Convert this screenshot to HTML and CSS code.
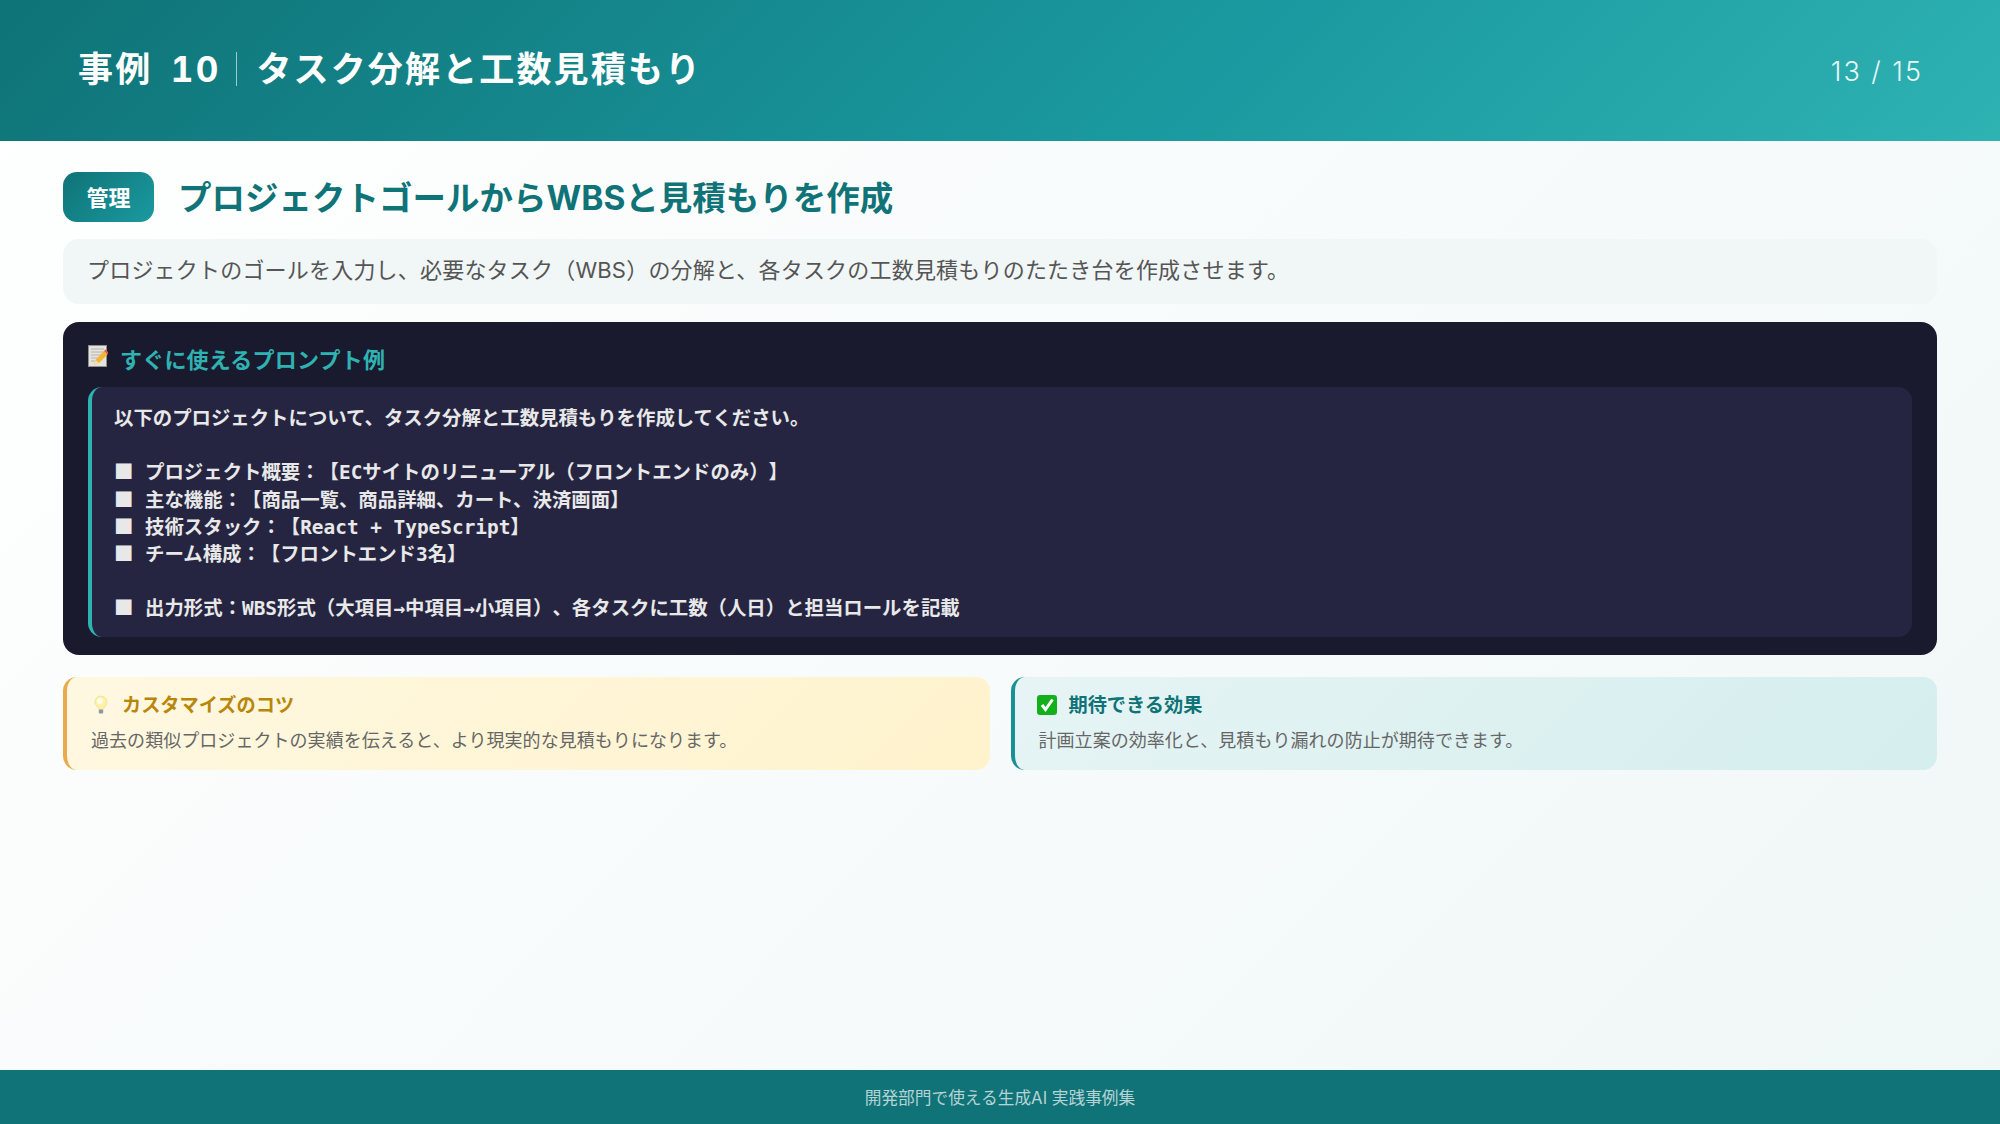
FILE: index.html
```html
<!DOCTYPE html>
<html lang="ja">
<head>
  <meta charset="UTF-8" />
  <title>事例 10 タスク分解と工数見積もり</title>
  <link rel="stylesheet" href="styles.css">
</head>
<body>
  <header class="slide-header">
    <h1>事例 10<span class="divider"></span>タスク分解と工数見積もり</h1>
    <span class="page-no">13 / 15</span>
  </header>

  <main class="content">
    <div class="case-title">
      <span class="badge">管理</span>
      <h2>プロジェクトゴールからWBSと見積もりを作成</h2>
    </div>
    <p class="lead">プロジェクトのゴールを入力し、必要なタスク（WBS）の分解と、各タスクの工数見積もりのたたき台を作成させます。</p>

    <section class="prompt">
      <h3>
        <svg class="icon-memo" viewBox="0 0 20 22" width="20" height="22">
          <rect x=".5" y=".5" width="18" height="21" fill="#e6e3dc" stroke="#8f8f8f"/>
          <path d="M3 4h13M3 7h13M3 10h13M3 13h7M3 16h4" stroke="#b4b4b4"/>
          <path d="M6 20l1.5-5L16 6l3.5 3.5L11 18z" fill="#f2b632"/>
          <path d="M6 20l1.5-5 3.5 3z" fill="#f6dcb0"/>
          <path d="M16 6l1.5-1.5L21 8l-1.5 1.5z" fill="#d9604c"/>
        </svg>
        すぐに使えるプロンプト例
      </h3>
      <pre class="prompt-body">以下のプロジェクトについて、タスク分解と工数見積もりを作成してください。

<span class="mark">■</span> プロジェクト概要：【ECサイトのリニューアル（フロントエンドのみ）】
<span class="mark">■</span> 主な機能：【商品一覧、商品詳細、カート、決済画面】
<span class="mark">■</span> 技術スタック：【React + TypeScript】
<span class="mark">■</span> チーム構成：【フロントエンド3名】

<span class="mark">■</span> 出力形式：WBS形式（大項目→中項目→小項目）、各タスクに工数（人日）と担当ロールを記載</pre>
    </section>

    <div class="cards">
      <section class="card card-tip">
        <h4>
          <svg viewBox="0 0 20 20" width="20" height="20">
            <path d="M10 1a6 6 0 0 0-4 10.5c1 1 1.6 2 1.7 3h4.6c.1-1 .7-2 1.7-3A6 6 0 0 0 10 1z" fill="#fdf0a8" stroke="#e8d98a" stroke-width=".6"/>
            <circle cx="9" cy="6" r="3" fill="#fffde8"/>
            <rect x="7.8" y="14.6" width="4.4" height="3.8" rx="1" fill="#8f95a3"/>
          </svg>
          カスタマイズのコツ
        </h4>
        <p>過去の類似プロジェクトの実績を伝えると、より現実的な見積もりになります。</p>
      </section>
      <section class="card card-effect">
        <h4>
          <svg viewBox="0 0 20 20" width="20" height="20">
            <rect width="20" height="20" rx="3" fill="#14b01c"/>
            <path d="M5 10l3.5 4.5L15.5 4.5" fill="none" stroke="#fff" stroke-width="3"/>
          </svg>
          期待できる効果
        </h4>
        <p>計画立案の効率化と、見積もり漏れの防止が期待できます。</p>
      </section>
    </div>
  </main>

  <footer class="slide-footer">開発部門で使える生成AI 実践事例集</footer>
</body>
</html>
```

FILE: styles.css
```css
/* Base */
* {
  box-sizing: border-box;
  margin: 0;
  padding: 0;
}
html, body {
  height: 100%;
}
body {
  display: flex;
  flex-direction: column;
  font-family: 'Inter', 'Noto Sans CJK JP', sans-serif;
  color: #555;
  background: linear-gradient(135deg, #fff 0%, #f0f7f7 100%);
}

/* Header */
.slide-header {
  height: 141px;
  flex-shrink: 0;
  display: flex;
  align-items: center;
  justify-content: space-between;
  padding: 0 78px;
  color: #fff;
  background: linear-gradient(135deg, #0f7377 0%, #1a9aa0 60%, #2fb2b2 100%);
}
.slide-header h1 {
  display: flex;
  align-items: center;
  font-size: 35px;
  font-weight: 700;
  letter-spacing: 2.15px;
  word-spacing: 7px;
  font-feature-settings: "tnum";
  padding-bottom: 8px;
}
.divider {
  width: 1px;
  height: 34px;
  margin: 5px 19px 0 16px;
  background: rgba(255,255,255,0.6);
}
.page-no {
  font-size: 27px;
  font-weight: 300;
  letter-spacing: 2px;
  margin: 2px -1px 0 0;
  opacity: 0.9;
}

/* Content */
.content {
  flex: 1;
  padding: 31px 63px 0;
}
.case-title {
  height: 50px;
  display: flex;
  align-items: center;
  gap: 24px;
}
.badge {
  width: 91px;
  height: 50px;
  padding-bottom: 3px;
  display: flex;
  align-items: center;
  justify-content: center;
  border-radius: 14px;
  color: #fff;
  font-size: 22px;
  font-weight: 700;
  background: linear-gradient(135deg, #0f7377, #1a9aa0);
}
.case-title h2 {
  padding-bottom: 4px;
  font-size: 33.5px;
  font-weight: 700;
  color: #0f7377;
}
.lead {
  height: 65px;
  margin-top: 17px;
  padding: 0 24px;
  line-height: 62px;
  font-size: 22px;
  letter-spacing: 0.2px;
  border-radius: 16px;
  background: #f1f6f7;
}

/* Prompt */
.prompt {
  height: 333px;
  margin-top: 18px;
  padding: 22px 25px 17px;
  border-radius: 16px;
  background: #1a1a2e;
}
.prompt h3 {
  height: 43px;
  display: flex;
  align-items: flex-start;
  gap: 12px;
  font-size: 22px;
  font-weight: 700;
  letter-spacing: 0.2px;
  line-height: 33px;
  color: #2fb2b2;
}
.icon-memo {
  margin-top: 1px;
}
.prompt-body {
  height: 250px;
  padding: 18px 22px;
  border-left: 4px solid #2fb2b2;
  border-radius: 14px;
  background: #252542;
  font-family: 'DejaVu Sans Mono', 'Noto Sans CJK JP', monospace;
  font-size: 19.4px;
  font-weight: 700;
  line-height: 27.2px;
  text-spacing-trim: space-all;
  color: #e8e8e8;
}
.mark {
  font-family: 'Noto Sans CJK JP', sans-serif;
  font-weight: 400;
  line-height: 0;
}

/* Cards */
.cards {
  display: grid;
  grid-template-columns: 1fr 1fr;
  gap: 21px;
  margin-top: 22px;
}
.card {
  height: 93px;
  padding: 13px 24px;
  border-left: 4px solid;
  border-radius: 14px;
}
.card h4 {
  display: flex;
  align-items: center;
  gap: 11px;
  font-size: 19.2px;
  font-weight: 700;
  line-height: 30px;
}
.card p {
  margin-top: 7px;
  font-size: 18px;
  letter-spacing: 0.05px;
  line-height: 28px;
  color: #666;
}
.card-tip {
  border-color: #e9a94f;
  background: linear-gradient(135deg, #fff8e1, #fff3cd);
}
.card-tip h4 {
  color: #b8860b;
}
.card-effect {
  border-color: #1a8f94;
  background: linear-gradient(135deg, #e6f4f4, #d5eeee);
}
.card-effect h4 {
  gap: 12px;
  color: #0f7377;
}
.card-effect svg {
  margin-left: -2px;
}

/* Footer */
.slide-footer {
  height: 54px;
  flex-shrink: 0;
  display: flex;
  align-items: center;
  justify-content: center;
  font-size: 16.7px;
  color: rgba(255,255,255,0.7);
  background: #0f7377;
}
```
